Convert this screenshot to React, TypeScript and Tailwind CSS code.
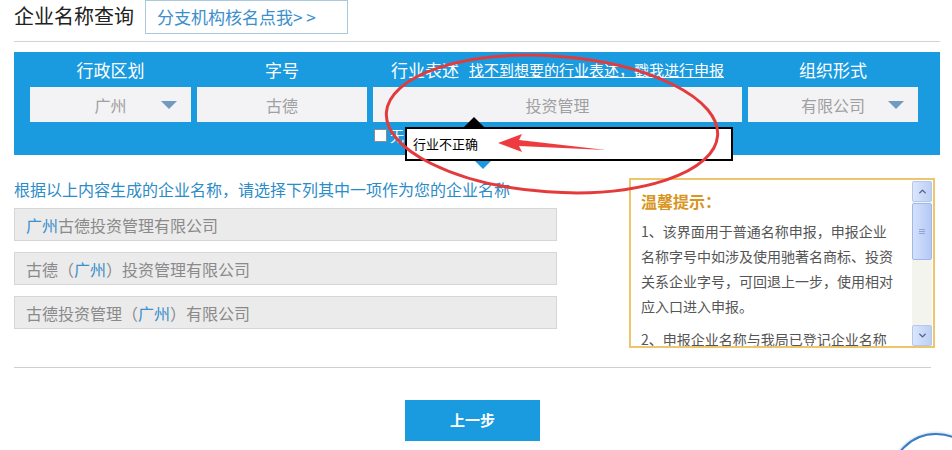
import { ChevronUp, ChevronDown } from "lucide-react";

const font = { fontFamily: '"Noto Sans CJK SC", "Noto Sans", sans-serif' };

function Caret() {
  return (
    <span className="absolute right-[14px] top-1/2 -translate-y-1/2 h-0 w-0 border-x-[8px] border-t-[8px] border-x-transparent border-t-[#6f9ac2]" />
  );
}

function Field({ text, caret }: { text: string; caret?: boolean }) {
  return (
    <div className="relative flex h-[35px] items-center justify-center bg-[#f3f3f5] text-[16px] text-[#a0a0a0]">
      {text}
      {caret && <Caret />}
    </div>
  );
}

function NameOption({ parts }: { parts: [string, boolean][] }) {
  return (
    <div className="flex h-[33px] items-center border border-[#d6d6d6] bg-[#ebebeb] pl-[11px] text-[16px] text-[#8a8a8a]">
      {parts.map(([t, blue], i) => (
        <span key={i} className={blue ? "text-[#3a8fcc]" : ""}>
          {t}
        </span>
      ))}
    </div>
  );
}

function TipsBox() {
  return (
    <div className="relative h-[170px] w-[306px] overflow-hidden border-2 border-[#eec46c] bg-white">
      <div className="pl-[10px] pt-[10px]">
        <div className="h-[22px] text-[16px] font-bold leading-[22px] text-[#d99522]">温馨提示：</div>
        <p className="mt-[7px] w-[256px] text-[14px] leading-[25px] text-[#555]">
          1、该界面用于普通名称申报，申报企业名称字号中如涉及使用驰著名商标、投资关系企业字号，可回退上一步，使用相对应入口进入申报。
        </p>
        <p className="mt-[8px] w-[256px] text-[14px] leading-[25px] text-[#555]">
          2、申报企业名称与我局已登记企业名称相同或近似的，将不予核准。
        </p>
      </div>
      <div className="absolute right-[1px] top-[1px] flex h-[165px] w-[20px] flex-col bg-[#f4f4ef]">
        <div className="flex h-[21px] items-center justify-center rounded-[2px] border border-[#b3c8ef] bg-gradient-to-r from-[#dce6fb] to-[#bccff5] text-[#4d6185]">
          <ChevronUp size={11} strokeWidth={3} />
        </div>
        <div className="mt-[1px] flex h-[57px] items-center justify-center rounded-[2px] border border-[#9fb8ea] bg-gradient-to-r from-[#d4e1fc] to-[#b5c9f4]">
          <div className="flex flex-col gap-[1px]">
            <span className="h-px w-[6px] bg-[#8ea6d6]" />
            <span className="h-px w-[6px] bg-[#8ea6d6]" />
            <span className="h-px w-[6px] bg-[#8ea6d6]" />
          </div>
        </div>
        <div className="flex-1" />
        <div className="flex h-[21px] items-center justify-center rounded-[2px] border border-[#b3c8ef] bg-gradient-to-r from-[#dce6fb] to-[#bccff5] text-[#4d6185]">
          <ChevronDown size={11} strokeWidth={3} />
        </div>
      </div>
    </div>
  );
}

export default function App() {
  return (
    <div className="relative h-[450px] w-[952px] overflow-hidden bg-white" style={font}>
      <div className="pl-[14px]">
        <div className="flex h-[34px] items-start">
          <span className="mt-[3px] text-[20px] leading-[26px] text-[#222]">企业名称查询</span>
          <span className="ml-[11px] flex h-[34px] w-[203px] items-center border border-[#a9c9de] pl-[11px] text-[17px] text-[#3a8fcc]">
            分支机构核名点我&gt; &gt;
          </span>
        </div>
        <div className="mt-[7px] h-px w-[926px] bg-[#cfd4d8]" />

        <div className="mt-[10px] w-[926px] bg-[#1a9be0] pb-[13px] pl-[16px] pt-[4px]">
          <div className="grid grid-cols-[161px_170px_369px_170px] gap-x-[6px] text-white">
            <div className="flex h-[28px] items-center justify-center text-[17px]">行政区划</div>
            <div className="flex h-[28px] items-center justify-center text-[17px]">字号</div>
            <div className="flex h-[28px] items-center justify-center gap-[10px]">
              <span className="text-[17px]">行业表述</span>
              <span className="text-[15px] underline">找不到想要的行业表述，戳我进行申报</span>
            </div>
            <div className="flex h-[28px] items-center justify-center text-[17px]">组织形式</div>
          </div>
          <div className="mt-[3px] grid grid-cols-[161px_170px_369px_170px] gap-x-[6px]">
            <Field text="广州" caret />
            <Field text="古德" />
            <Field text="投资管理" />
            <Field text="有限公司" caret />
          </div>
          <div className="mt-[7px] flex h-[13px] items-center pl-[344px] text-[14px] text-white">
            <span className="h-[13px] w-[13px] border border-[#8d8d8d] bg-white" />
            <span className="ml-[3px]">无</span>
          </div>
        </div>

        <div className="mt-[23px] flex">
          <div className="w-[543px]">
            <div className="h-[22px] text-[16px] leading-[22px] text-[#2b8cc8]">
              根据以上内容生成的企业名称，请选择下列其中一项作为您的企业名称
            </div>
            <div className="mt-[8px] flex flex-col gap-[11px]">
              <NameOption parts={[["广州", true], ["古德投资管理有限公司", false]]} />
              <NameOption parts={[["古德（", false], ["广州", true], ["）投资管理有限公司", false]]} />
              <NameOption parts={[["古德投资管理（", false], ["广州", true], ["）有限公司", false]]} />
            </div>
          </div>
          <div className="ml-[72px]">
            <TipsBox />
          </div>
        </div>

        <div className="mt-[19px] h-px w-[917px] bg-[#cfcfcf]" />
        <div className="mt-[32px] flex w-[917px] justify-center">
          <button className="h-[41px] w-[135px] bg-[#1a9be0] text-[15px] font-bold text-white">上一步</button>
        </div>
      </div>

      {/* tooltip over the industry field */}
      <div className="absolute left-[464px] top-[117px] h-0 w-0 border-x-[10px] border-b-[10px] border-x-transparent border-b-black" />
      <div className="absolute left-[405px] top-[127px] flex h-[34px] w-[328px] items-center border-2 border-black bg-white pl-[6px] text-[13px] text-black">
        行业不正确
      </div>
      <div className="absolute left-[475px] top-[161px] h-0 w-0 border-x-[8px] border-t-[8px] border-x-transparent border-t-[#1a9be0]" />

      {/* annotation drawn on the screenshot */}
      <svg className="pointer-events-none absolute left-0 top-0" width="952" height="450">
        <ellipse
          cx="552"
          cy="124"
          rx="166"
          ry="68"
          fill="none"
          stroke="#e53a3c"
          strokeWidth="3"
          transform="rotate(4 552 124)"
        />
        <polygon points="498,143 522,134 519,140 606,150 519,146 522,152" fill="#ee3b3f" />
      </svg>

      {/* floating widget at the corner */}
      <div className="absolute left-[890px] top-[433px] h-[92px] w-[92px] rounded-full border-2 border-[#3b7cc4] bg-white shadow-[0_0_3px_#9bbde0]" />
    </div>
  );
}
